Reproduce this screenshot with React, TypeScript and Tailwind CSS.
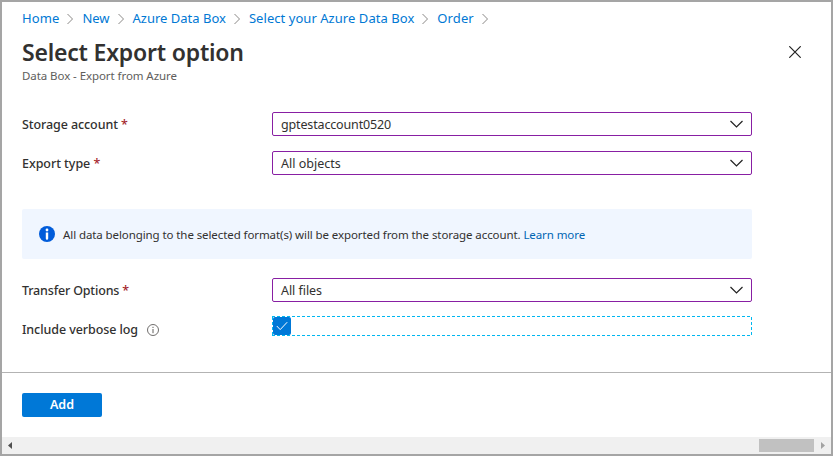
import React from "react";

function Crumb({ label, tracking }: { label: string; tracking: string }) {
  return (
    <li className="flex items-center">
      <a className={`text-[#0078d4] ${tracking}`}>{label}</a>
      <svg className="ml-2 mr-[8px] h-3 w-[7px]" viewBox="0 0 7 12" fill="none" stroke="#8a8886">
        <path d="M.5 1l5 5-5 5" />
      </svg>
    </li>
  );
}

function Label({ children, tracking }: { children: React.ReactNode; tracking: string }) {
  return <div className={`w-[250px] shrink-0 pt-0.5 text-[12.5px] font-medium text-[#323130] ${tracking}`}>{children}</div>;
}

function Required() {
  return <span className="text-[#a4262c]">*</span>;
}

function Select({ value, tracking }: { value: string; tracking: string }) {
  return (
    <div className="flex h-6 w-[480px] items-center justify-between rounded-[2px] border border-[#881fa3] pl-2 pr-2">
      <span className={`pt-0.5 text-[12.5px] leading-[22px] text-[#323130] ${tracking}`}>{value}</span>
      <svg className="h-[8px] w-[13px]" viewBox="0 0 13 8" fill="none" stroke="#222" strokeWidth="1.2">
        <path d="M.5 1l6 6 6-6" />
      </svg>
    </div>
  );
}

export default function App() {
  return (
    <div className="flex h-[456px] w-[833px] flex-col border-2 border-[#a5a5a5] bg-white font-['Noto_Sans','Open_Sans',sans-serif] text-[#323130]">
      <header className="h-[110px] pl-5">
        <ol className="flex h-[34px] items-center text-[13px]">
          <Crumb label="Home" tracking="tracking-[0.1px]" />
          <Crumb label="New" tracking="tracking-[0px]" />
          <Crumb label="Azure Data Box" tracking="tracking-[0px]" />
          <Crumb label="Select your Azure Data Box" tracking="tracking-[0.05px]" />
          <Crumb label="Order" tracking="tracking-[0.1px]" />
        </ol>
        <div className="flex justify-between pr-[30px]">
          <div>
            <h1 className="h-8 text-[23px] leading-8 font-semibold tracking-[-0.2px]">Select Export option</h1>
            <p className="text-[11.5px] leading-4 tracking-[-0.07px] text-[#605e5c]">Data Box - Export from Azure</p>
          </div>
          <svg className="mt-[10px] h-3 w-3" viewBox="0 0 12 12" fill="none" stroke="#222" strokeWidth="1.2">
            <path d="M.3.3l11.4 11.4M11.7.3L.3 11.7" />
          </svg>
        </div>
      </header>
      <main className="flex h-[260px] flex-col pl-5">
        <div className="flex h-6 items-center">
          <Label tracking="tracking-[-0.09px]">Storage account <Required /></Label>
          <Select value="gptestaccount0520" tracking="tracking-[-0.15px]" />
        </div>
        <div className="mt-[15px] flex h-6 items-center">
          <Label tracking="tracking-[-0.05px]">Export type <Required /></Label>
          <Select value="All objects" tracking="tracking-[0px]" />
        </div>
        <div className="mt-[34px] flex h-[50px] w-[730px] items-center rounded-[2px] bg-[#f0f6ff] pl-[17px]">
          <svg className="h-4 w-4" viewBox="0 0 16 16">
            <circle cx="8" cy="8" r="8" fill="#015cda" />
            <circle cx="8" cy="4" r="1.4" fill="#fff" />
            <path d="M6.8 6.4h2.4v6.1q0 1.2-1.2 1.2t-1.2-1.2z" fill="#fff" />
          </svg>
          <p className="ml-2 pt-0.5 text-[11.5px] tracking-[-0.09px]">
            All data belonging to the selected format(s) will be exported from the storage account. <a className="text-[#0065b3]">Learn more</a>
          </p>
        </div>
        <div className="mt-[19px] flex h-6 items-center">
          <Label tracking="tracking-[-0.17px]">Transfer Options <Required /></Label>
          <Select value="All files" tracking="tracking-[-0.05px]" />
        </div>
        <div className="mt-[14px] flex">
          <div className="flex h-[27px] w-[250px] items-center text-[12.5px] font-medium tracking-[-0.08px]">
            <span className="pt-0.5">Include verbose log</span>
            <svg className="ml-[9px] h-3 w-3" viewBox="0 0 12 12" fill="none" stroke="#605e5c">
              <circle cx="6" cy="6" r="5.5" strokeWidth=".9" />
              <path d="M6 5v4.2M6 2.8v1.2" />
            </svg>
          </div>
          {/* Focus ring: outer layer paints the dashes, inner layers mask the centre */}
          <div className="h-5 w-[480px] bg-[repeating-linear-gradient(90deg,#00b7f0_0_3px,#fff_3px_5px)] py-px">
            <div className="h-[18px] bg-[repeating-linear-gradient(180deg,#00b7f0_0_3px,#fff_3px_5px)] px-px">
              <div className="h-[18px] bg-white">
                <div className="flex h-[18px] w-[18px] items-center justify-center rounded-[2px] bg-[#0078d7]">
                  <svg className="h-3 w-3" viewBox="0 0 12 12" fill="none" stroke="#fff">
                    <path d="M.8 6l3.4 3.6L11.2 2.2" />
                  </svg>
                </div>
              </div>
            </div>
          </div>
        </div>
      </main>
      <footer className="flex h-[65px] items-start border-t border-[#b3b3b3] pt-5 pl-5">
        <button className="h-6 w-20 rounded-[2px] bg-[#0078d7] text-[12.5px] leading-[22px] font-semibold text-white">Add</button>
      </footer>
      <div className="flex h-[17px] items-center bg-[#f0f0f0]">
        <svg className="ml-1.5 h-[7px] w-1" viewBox="0 0 4 7"><path d="M4 0v7L0 3.5z" fill="#505050" /></svg>
        <div className="ml-[747px] h-[13px] w-[55px] bg-[#c1c1c1]" />
        <svg className="ml-[7px] h-[7px] w-1" viewBox="0 0 4 7"><path d="M0 0v7l4-3.5z" fill="#a3a3a3" /></svg>
      </div>
    </div>
  );
}
